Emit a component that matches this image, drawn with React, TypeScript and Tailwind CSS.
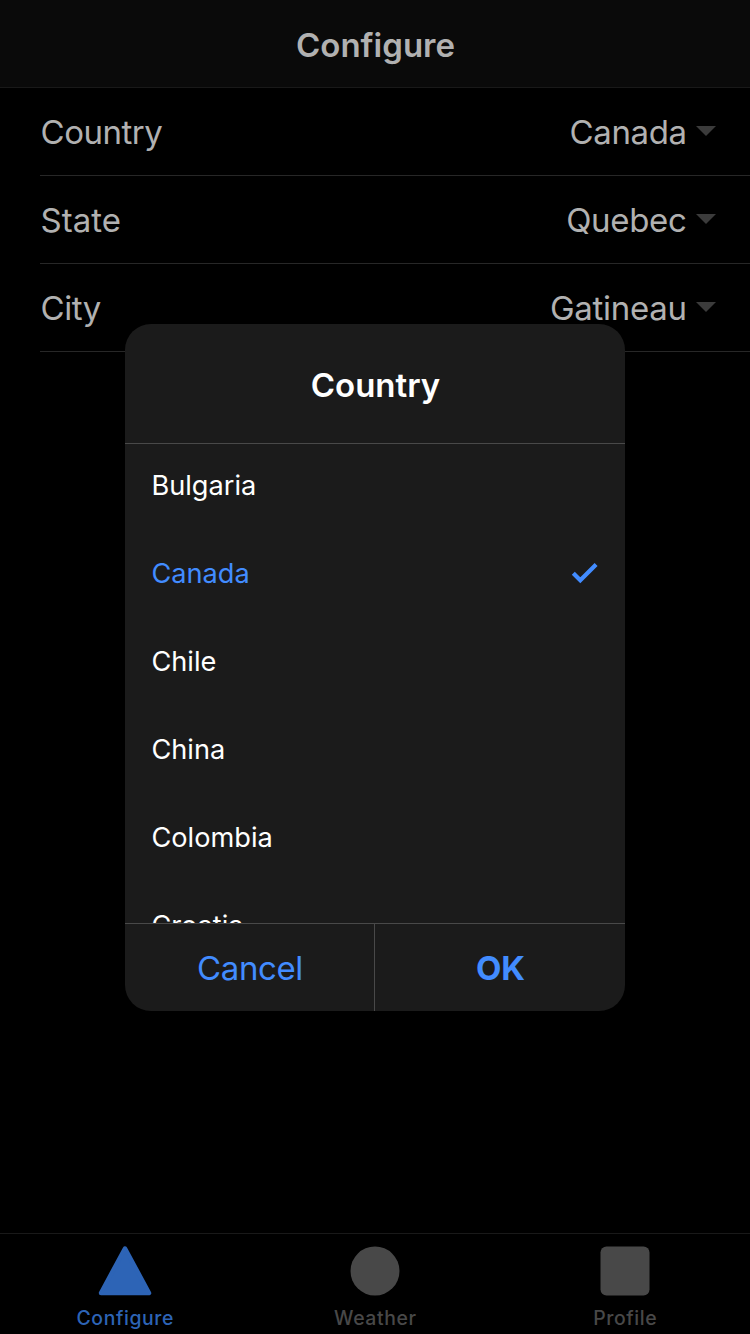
import React from "react";

const fields = [
  { label: "Country", value: "Canada", labelClass: "tracking-[-0.5px]", valueClass: "tracking-[-0.4px]" },
  { label: "State", value: "Quebec", labelClass: "tracking-[0px]", valueClass: "tracking-[-0.3px]" },
  { label: "City", value: "Gatineau", labelClass: "tracking-[-0.5px]", valueClass: "tracking-[-0.3px]" },
];
const countries = ["Bulgaria", "Canada", "Chile", "China", "Colombia", "Croatia"];

export default function App() {
  return (
    <div className="relative flex h-[1334px] w-[750px] flex-col overflow-hidden bg-black font-['Inter',sans-serif] text-[#b1b1b1]">
      <header className="flex h-[88px] items-center justify-center border-b border-[#191919] bg-[#0a0a0a] pt-[5px] pl-px text-[33px] font-semibold">
        Configure
      </header>
      <main className="flex-1 pl-10">
        {fields.map((f) => (
          <div key={f.label} className="flex h-[88px] items-center justify-between border-b border-[#272727] pt-[2px] pr-[34px] text-[33px]">
            <span className={`pl-[0.6px] ${f.labelClass}`}>{f.label}</span>
            <span className={`flex items-center gap-[9.4px] ${f.valueClass}`}>
              {f.value}
              <svg width="20" height="10" viewBox="0 0 20 10" className="-mt-1"><path d="M0 0h20L10 10z" fill="#3b3b3b" /></svg>
            </span>
          </div>
        ))}
      </main>
      <nav className="grid h-[101px] grid-cols-3 border-t border-[#191919] bg-black text-center text-[19.4px] leading-[30px] font-medium tracking-[0.6px] text-[#484848]">
        <div className="flex flex-col items-center pt-3 text-[#2d64b6]">
          <svg width="54" height="50" viewBox="0 0 54 50"><path d="M27 2.5 51 47H3Z" fill="currentColor" stroke="currentColor" strokeWidth="4.5" strokeLinejoin="round" /></svg>
          <span className="mt-[7px] pl-[0.6px]">Configure</span>
        </div>
        <div className="flex flex-col items-center pt-3">
          <svg width="50" height="50" viewBox="0 0 50 50"><circle cx="25" cy="25" r="24.5" fill="currentColor" /></svg>
          <span className="mt-[7px] pl-[0.6px]">Weather</span>
        </div>
        <div className="flex flex-col items-center pt-3">
          <svg width="50" height="50" viewBox="0 0 50 50"><rect x=".5" y=".5" width="49" height="49" rx="6" fill="currentColor" /></svg>
          <span className="mt-[7px] pl-[0.6px]">Profile</span>
        </div>
      </nav>
      <section className="absolute top-[324px] left-[125px] flex h-[687px] w-[500px] flex-col overflow-hidden rounded-[26px] bg-[#1b1b1b] text-white">
        <h2 className="flex h-[120px] shrink-0 items-center justify-center border-b border-[#494949] pt-[5px] pl-px text-[33px] font-semibold">Country</h2>
        <div className="h-[479px] shrink-0 overflow-hidden">
          <div className="-mt-[3px]">
            {countries.map((name) => (
              <div key={name} className={`flex h-[88px] items-center justify-between px-[26px] text-[27.2px] ${name === "Canada" ? "text-[#428cff]" : ""}`}>
                <span className="pt-[2px] pl-[0.4px]">{name}</span>
                {name === "Canada" && <svg width="28" height="22" viewBox="0 0 28 22"><path d="M2.3 11.2 9.3 18.2 25.1 2.4" fill="none" stroke="currentColor" strokeWidth="4.2" /></svg>}
              </div>
            ))}
          </div>
        </div>
        <div className="grid flex-1 grid-cols-2 border-t border-[#494949] text-[33px] text-[#428cff]">
          <button className="border-r border-[#494949] pt-[2px] pl-px tracking-[-0.4px]">Cancel</button>
          <button className="pt-[2px] pl-px font-bold">OK</button>
        </div>
      </section>
    </div>
  );
}
